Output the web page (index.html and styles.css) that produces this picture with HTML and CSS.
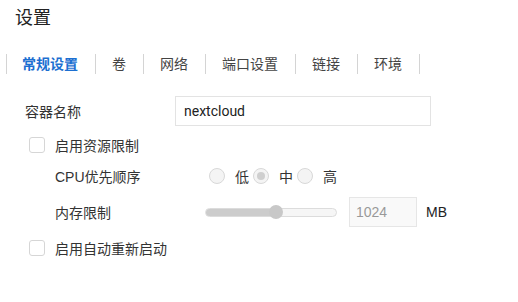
FILE: index.html
```html
<!DOCTYPE html>
<html lang="zh-CN">
<head>
    <meta charset="UTF-8">
    <title>设置</title>
    <link rel="stylesheet" href="styles.css">
</head>
<body>
    <h2 class="page-title">设置</h2>

    <!-- Tabs -->
    <div class="tabs">
        <div class="tab active">常规设置</div>
        <div class="tab">卷</div>
        <div class="tab">网络</div>
        <div class="tab">端口设置</div>
        <div class="tab">链接</div>
        <div class="tab">环境</div>
    </div>

    <div class="form">
        <div class="row row-name">
            <div class="label">容器名称</div>
            <div class="text-input">nextcloud</div>
        </div>

        <div class="row row-check">
            <span class="checkbox"></span>
            <span>启用资源限制</span>
        </div>

        <div class="row sub-row row-cpu">
            <div class="label">CPU优先顺序</div>
            <div class="radios">
                <span class="radio"></span><span class="radio-text">低</span>
                <span class="radio checked"></span><span class="radio-text">中</span>
                <span class="radio"></span><span class="radio-text">高</span>
            </div>
        </div>

        <div class="row sub-row row-mem">
            <div class="label">内存限制</div>
            <div class="slider">
                <div class="slider-fill" style="width: 54%"></div>
                <div class="slider-thumb" style="left: 54%"></div>
            </div>
            <div class="num-input">1024</div>
            <span class="unit">MB</span>
        </div>

        <div class="row row-check row-restart">
            <span class="checkbox"></span>
            <span>启用自动重新启动</span>
        </div>
    </div>
</body>
</html>
```

FILE: styles.css
```css
body {
    margin: 0;
    padding: 0;
    font-family: "Liberation Sans", "Noto Sans CJK SC", sans-serif;
    font-size: 14px;
    color: #333;
    background: #fff;
}

.page-title {
    margin: 0;
    padding: 6px 15px 0;
    height: 24px;
    line-height: 24px;
    font-size: 18px;
    font-weight: normal;
    color: #222;
}

/* Tab-Leiste */
.tabs {
    display: flex;
    margin: 24px 0 0 6px;
    height: 20px;
}

.tab {
    border-left: 1px solid #d4d4d4;
    padding: 0 17px 0 16px;
    line-height: 20px;
    color: #444;
}

.tab:last-child {
    border-right: 1px solid #d4d4d4;
}

.tab.active {
    padding-left: 15px;
    color: #1c6fd1;
    font-weight: bold;
}

/* Formular */
.form {
    padding: 22px 0 0 25px;
}

.row {
    display: flex;
    align-items: center;
    height: 30px;
}

.label {
    width: 150px;
    flex-shrink: 0;
}

.row-check {
    margin-top: 4px;
    padding-left: 4px;
}

.row-cpu {
    margin-top: 1px;
}

.row-mem {
    margin-top: 6px;
}

.row-restart {
    margin-top: 6px;
}

.sub-row {
    padding-left: 30px;
}

.checkbox {
    width: 14px;
    height: 14px;
    border: 1px solid #d6d6d6;
    border-radius: 3px;
    margin-right: 10px;
}

.text-input {
    width: 238px;
    height: 28px;
    line-height: 28px;
    border: 1px solid #e3e3e3;
    padding: 0 8px;
    color: #222;
    font-family: Roboto, "Liberation Sans", sans-serif;
}

.radios {
    display: flex;
    align-items: center;
    padding-left: 4px;
}

.radio {
    width: 14px;
    height: 14px;
    border: 1px solid #d8d8d8;
    border-radius: 50%;
    background: #f4f4f4;
    position: relative;
}

.radio.checked::after {
    content: '';
    position: absolute;
    top: 3px;
    left: 3px;
    width: 8px;
    height: 8px;
    border-radius: 50%;
    background: #cfcfcf;
}

.radio-text {
    margin: 0 4px 0 10px;
}

.slider {
    position: relative;
    width: 130px;
    height: 7px;
    border: 1px solid #dcdcdc;
    border-radius: 5px;
    background: #f6f6f6;
}

.slider-fill {
    height: 100%;
    background: #cccccc;
    border-radius: 5px 0 0 5px;
}

.slider-thumb {
    position: absolute;
    top: -4px;
    width: 14px;
    height: 14px;
    margin-left: -7px;
    border-radius: 50%;
    background: #c8c8c8;
}

.num-input {
    margin-left: 12px;
    width: 54px;
    height: 28px;
    line-height: 28px;
    padding: 0 6px;
    border: 1px solid #e6e6e6;
    background: #f9f9f9;
    color: #999;
}

.unit {
    margin-left: 9px;
    color: #222;
}
```
